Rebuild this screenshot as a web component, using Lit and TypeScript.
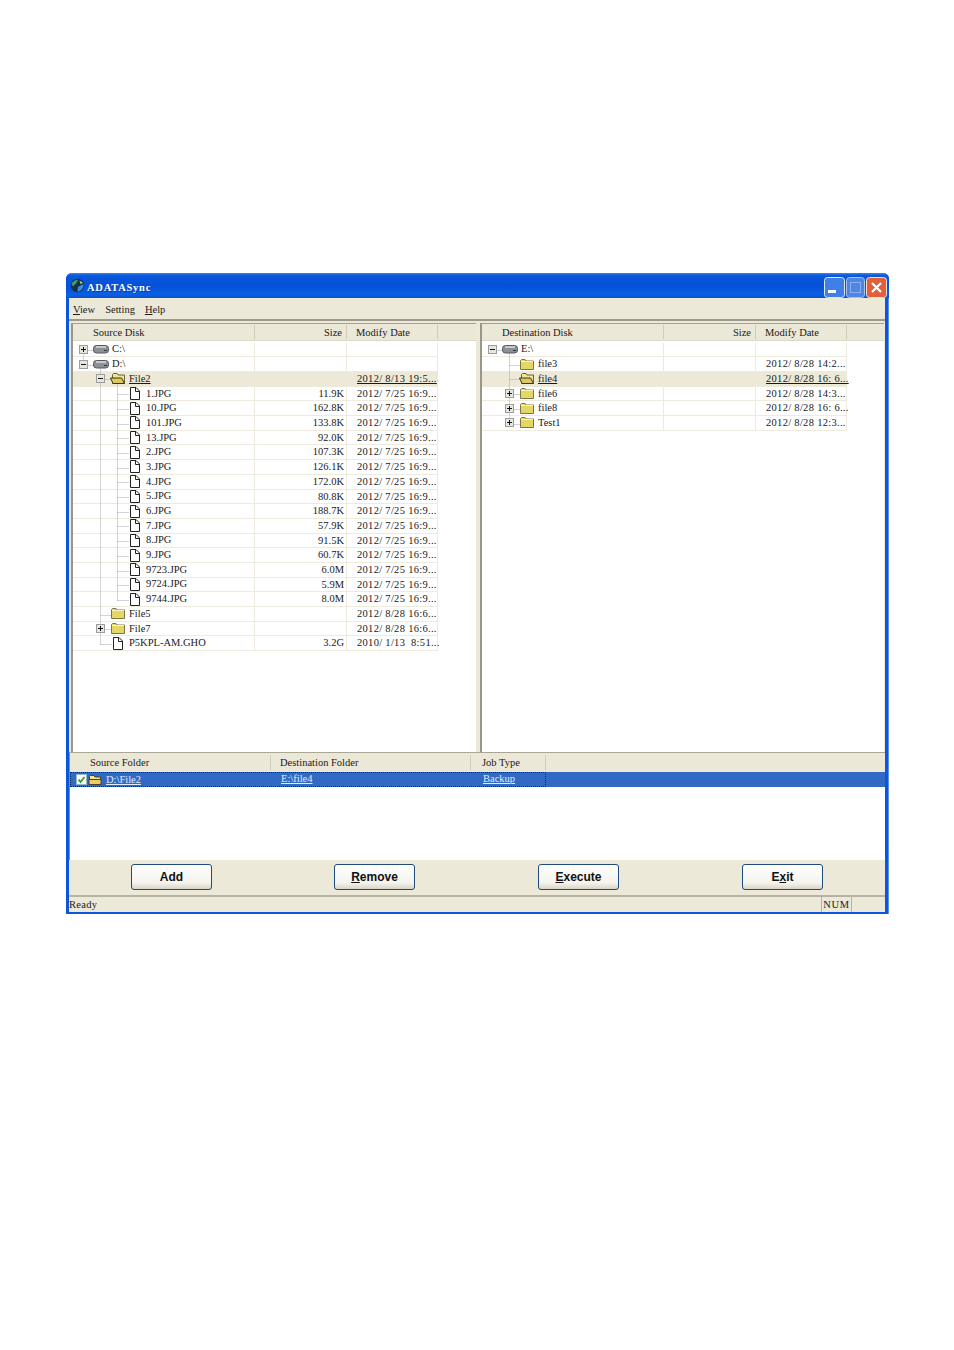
import { LitElement, html, css, svg, nothing } from "lit";
import { customElement } from "lit/decorators.js";

type Row = { n: string; d: number; k: "drive" | "folder" | "open" | "file"; e?: "+" | "-"; s?: string; t?: string; sel?: boolean };

const JPG = (n: string, s: string): Row => ({ n, d: 2, k: "file", s, t: "2012/ 7/25 16:9..." });

const LEFT: Row[] = [
  { n: "C:\\", d: 0, k: "drive", e: "+" },
  { n: "D:\\", d: 0, k: "drive", e: "-" },
  { n: "File2", d: 1, k: "open", e: "-", t: "2012/ 8/13 19:5...", sel: true },
  JPG("1.JPG", "11.9K"), JPG("10.JPG", "162.8K"), JPG("101.JPG", "133.8K"), JPG("13.JPG", "92.0K"),
  JPG("2.JPG", "107.3K"), JPG("3.JPG", "126.1K"), JPG("4.JPG", "172.0K"), JPG("5.JPG", "80.8K"),
  JPG("6.JPG", "188.7K"), JPG("7.JPG", "57.9K"), JPG("8.JPG", "91.5K"), JPG("9.JPG", "60.7K"),
  JPG("9723.JPG", "6.0M"), JPG("9724.JPG", "5.9M"), JPG("9744.JPG", "8.0M"),
  { n: "File5", d: 1, k: "folder", t: "2012/ 8/28 16:6..." },
  { n: "File7", d: 1, k: "folder", e: "+", t: "2012/ 8/28 16:6..." },
  { n: "P5KPL-AM.GHO", d: 1, k: "file", s: "3.2G", t: "2010/ 1/13  8:51..." },
];

const RIGHT: Row[] = [
  { n: "E:\\", d: 0, k: "drive", e: "-" },
  { n: "file3", d: 1, k: "folder", t: "2012/ 8/28 14:2..." },
  { n: "file4", d: 1, k: "open", t: "2012/ 8/28 16: 6...", sel: true },
  { n: "file6", d: 1, k: "folder", e: "+", t: "2012/ 8/28 14:3..." },
  { n: "file8", d: 1, k: "folder", e: "+", t: "2012/ 8/28 16: 6..." },
  { n: "Test1", d: 1, k: "folder", e: "+", t: "2012/ 8/28 12:3..." },
];

const ROW_H = 14.7;
const TREE_TOP = 1.65;

const folderIcon = (open: boolean) => open
  ? html`<svg class="ico" width="16" height="13" viewBox="0 0 16 13">
      <path d="M2.5 11.5V2.5L3.5 1.5H7L8 3H14.5V11.5Z" fill="#f0e39a" stroke="#6b6230"/>
      <path d="M.5 6H11.5L14.5 11.5H3Z" fill="#dccb5c" stroke="#3a3518"/>
    </svg>`
  : html`<svg class="ico" width="16" height="13" viewBox="0 0 16 13">
      <path d="M1.5 11.5V2.5L2.5 1.5H6L7 3H14.5V11.5Z" fill="#e3d766" stroke="#7d7544"/>
      <path d="M2 3.5H14" stroke="#fbf3c0"/>
    </svg>`;

const driveIcon = html`<svg class="ico" width="16" height="10" viewBox="0 0 16 10">
  <rect x=".5" y="1.5" width="15" height="7.5" rx="3" fill="#8d9094" stroke="#55585c"/>
  <path d="M3 3H13" stroke="#dfe2e5" stroke-width="1.4"/>
  <path d="M11 6.5H14" stroke="#35383b"/>
</svg>`;

const fileIcon = html`<svg class="ico" width="10" height="13" viewBox="0 0 10 13">
  <path d="M.5 .5H6L9.5 4V12.5H.5Z" fill="#fff" stroke="#222"/>
  <path d="M5.5 .5V4.5H9.5" fill="none" stroke="#222"/>
</svg>`;

const expander = (e: "+" | "-") => html`<svg class="exp" width="9" height="9" viewBox="0 0 9 9">
  <rect x=".5" y=".5" width="8" height="8" fill="#e6e6dc" stroke="#9a9ea1"/>
  <path d="M2 4.5H7" stroke="#111"/>
  ${e === "+" ? svg`<path d="M4.5 2V7" stroke="#111"/>` : nothing}
</svg>`;

@customElement("tree-pane")
class TreePane extends LitElement {
  static properties = { rows: { attribute: false }, title: {} };
  rows: Row[] = [];
  title = "";

  static styles = css`
    :host { display: flex; flex-direction: column; min-width: 0; background: #fff; border-left: 2px solid #9a978a; border-top: 1px solid #a5a294; position: relative; }
    .head { height: 16px; display: flex; background: #ebe8d8; border-bottom: 1px solid #dcd8c6; box-sizing: content-box; flex: none; }
    .hc { border-right: 1px solid #cfccb9; box-sizing: border-box; height: 14px; margin-top: 1px; line-height: 15px; white-space: pre; }
    .c1 { width: 182px; flex: none; }
    .c2 { width: 92px; flex: none; }
    .c3 { width: 91px; flex: none; }
    .head .c1 { padding-left: 20px; }
    .head .c2 { text-align: right; padding-right: 4px; }
    .head .c3 { padding-left: 9px; }
    .tree { position: relative; flex: 1; padding-top: 1.65px; }
    .lines { position: absolute; inset: 0; width: 100%; height: 100%; z-index: 1; pointer-events: none; }
    .row { display: flex; width: 365px; height: 14.7px; line-height: 14px; box-sizing: border-box; }
    .row.sel { background: #ece9d8; }
    .row > div { border-right: 1px solid #eeebde; border-bottom: 1px solid #eeebde; box-sizing: border-box; white-space: pre; overflow: hidden; }
    .row.sel > div { border-color: #ece9d8; }
    .row.sel .lbl, .row.sel .c3 { text-decoration: underline; }
    .name { display: flex; align-items: center; }
    .slotE { width: 9px; height: 9px; flex: none; margin-right: 5px; position: relative; z-index: 2; display: flex; }
    .exp { display: block; }
    .slotI { width: 16px; flex: none; margin-right: 3px; display: flex; justify-content: center; align-items: center; position: relative; z-index: 2; }
    .ico { display: block; }
    .row .c2 { text-align: right; padding-right: 2px; }
    .row > .c3 { padding-left: 10px; letter-spacing: .3px; overflow: visible; }
  `;

  lines() {
    const out: unknown[] = [];
    const cx = (d: number) => 6 + 17 * d + 4.5;
    const cy = (i: number) => Math.round(TREE_TOP + ROW_H * i + ROW_H / 2) + 0.5;
    this.rows.forEach((r, i) => {
      const x = cx(r.d);
      out.push(svg`<path d="M${x} ${cy(i)}H${x + 11}"/>`);
      let p = i - 1;
      while (p >= 0 && this.rows[p].d > r.d) p--;
      if (p >= 0) out.push(svg`<path d="M${x} ${cy(p)}V${cy(i)}"/>`);
    });
    return out;
  }

  render() {
    return html`
      <div class="head">
        <div class="hc c1">${this.title}</div>
        <div class="hc c2">Size</div>
        <div class="hc c3">Modify Date</div>
      </div>
      <div class="tree">
        <svg class="lines" fill="none" stroke="#a8a8a8" stroke-dasharray="1 1">${this.lines()}</svg>
        ${this.rows.map(r => html`
          <div class="row ${r.sel ? "sel" : ""}">
            <div class="c1 name" style="padding-left:${6 + 17 * r.d}px">
              <span class="slotE">${r.e ? expander(r.e) : nothing}</span>
              <span class="slotI">${r.k === "drive" ? driveIcon : r.k === "file" ? fileIcon : folderIcon(r.k === "open")}</span>
              <span class="lbl">${r.n}</span>
            </div>
            <div class="c2">${r.s ?? ""}</div>
            <div class="c3">${r.t ?? ""}</div>
          </div>`)}
      </div>
    `;
  }
}

@customElement("app-root")
class AppRoot extends LitElement {
  static styles = css`
    :host { display: block; font-family: "Liberation Serif", serif; font-size: 10.5px; color: #1a1a1a; padding: 273px 0 436px 66px; background: #fff; }
    .win { width: 823px; height: 641px; box-sizing: border-box; display: flex; flex-direction: column; background: #0a57dc; border-radius: 6px 6px 0 0; padding: 0 4px 2px 3px; box-shadow: inset -1px 0 #5b8fe8; }
    .title { height: 25px; flex: none; margin: 0 -4px 0 -3px; padding: 0 2px 0 4px; display: flex; align-items: center; border-radius: 6px 6px 0 0; background: linear-gradient(#3a86ee 0, #0a58dc 10%, #0550d8 50%, #0b5fe4 85%, #0a52cc 100%); color: #fff; font-weight: bold; font-size: 10.5px; letter-spacing: .75px; text-shadow: 1px 1px #0a3a9c; }
    .logo { margin-right: 2px; display: block; flex: none; }
    .title .t { flex: 1; padding-top: 3px; }
    .tb { display: flex; gap: 1px; margin-top: 3px; }
    .tb svg { display: block; }
    .body { flex: 1; min-height: 0; display: flex; flex-direction: column; background: #ece9d8; }
    .menu { flex: none; display: flex; align-items: center; padding: 1px 0 0 4px; gap: 10px; border-bottom: 2px solid #9d9a8c; box-sizing: border-box; height: 23px; }
    .panes { flex: 1; min-height: 0; display: grid; grid-template-columns: 405px 404px; gap: 4px; padding: 2px 0 0 2px; justify-content: start; border-bottom: 1px solid #a9a694; }
    .list { flex: none; height: 107px; display: flex; flex-direction: column; background: #fff; border-left: 1px solid #8f8d82; }
    .lhead { height: 19px; display: flex; background: #ebe8d8; flex: none; }
    .lhead div { height: 15px; margin-top: 2px; line-height: 15px; box-sizing: border-box; border-right: 1px solid #cfccb9; }
    .l1 { width: 201px; flex: none; }
    .l2 { width: 200px; flex: none; }
    .l3 { width: 75px; flex: none; }
    .lhead .l1 { padding-left: 20px; }
    .lhead .l2 { padding-left: 9px; }
    .lhead .l3 { padding-left: 11px; }
    .lrow { height: 15px; background: #316ac5; display: flex; color: #e3ebfa; line-height: 14px; flex: none; }
    .lrow .l1 { display: flex; align-items: center; padding-left: 6px; gap: 1px; box-sizing: border-box; }
    .lrow .l2 { padding-left: 10px; box-sizing: border-box; }
    .lrow .l3 { padding-left: 12px; box-sizing: border-box; }
    .lrow .f { display: flex; width: 476px; outline: 1px dotted #0d2a55; outline-offset: -1px; }
    .lrow .lnk { text-decoration: underline; margin-left: 3px; }
    .lrow .l2, .lrow .l3 { text-decoration: underline; }
    .btns { height: 35px; flex: none; display: grid; grid-template-columns: 203px 204px 204px 81px; align-items: start; padding: 4px 0 0 62px; box-sizing: border-box; }
    button { all: unset; box-sizing: border-box; width: 81px; height: 26px; text-align: center; line-height: 25px; font-family: "Liberation Sans", sans-serif; font-size: 12px; font-weight: bold; color: #111; border: 1px solid #1f4a7e; border-radius: 3px; background: linear-gradient(#fefefe, #f4f3ed 75%, #d8d4c6); }
    .status { flex: none; display: flex; align-items: center; border-top: 2px solid #b6b3a4; line-height: 15px; box-sizing: border-box; height: 17px; letter-spacing: .3px; }
    .status .r { flex: 1; }
    .status .num { width: 31px; text-align: center; border-left: 1px solid #b5b2a2; border-right: 1px solid #b5b2a2; margin-right: 33px; box-sizing: border-box; letter-spacing: .6px; }
  `;

  render() {
    return html`
      <div class="win">
        <div class="title">
          <svg class="logo" width="15" height="15" viewBox="0 0 15 15">
            <circle cx="7.5" cy="7.5" r="6.8" fill="#15324a"/>
            <path d="M1.5 6C3 2.5 6 1.5 8 2L6.5 5 3 8.5Z" fill="#3f9e5a"/>
            <path d="M8 9C10 8 12 6 13.6 6.5 13.8 10 11 13.5 7.5 13.6Z" fill="#3a8fd0"/>
            <path d="M9.5 2.5 13 5 10.5 6Z" fill="#a6d8a0"/>
          </svg>
          <span class="t">ADATASync</span>
          <div class="tb">
            <svg width="21" height="21" viewBox="0 0 21 21">
              <rect x=".5" y=".5" width="20" height="20" rx="3" fill="#3f7fe8" stroke="#dfe8fb"/>
              <rect x="4" y="13" width="8" height="3" fill="#fff"/>
            </svg>
            <svg width="19" height="21" viewBox="0 0 19 21">
              <rect x=".5" y=".5" width="18" height="20" rx="3" fill="#4d86e6" stroke="#a9c3f0"/>
              <rect x="4.5" y="5.5" width="10" height="10" fill="none" stroke="#8fb0ea"/>
            </svg>
            <svg width="21" height="21" viewBox="0 0 21 21">
              <rect x=".5" y=".5" width="20" height="20" rx="3" fill="#e0603a" stroke="#f3e0d8"/>
              <path d="M6 6 15 15M15 6 6 15" stroke="#fff" stroke-width="2.2"/>
            </svg>
          </div>
        </div>
        <div class="body">
          <div class="menu">
            <span><u>V</u>iew</span><span>Setting</span><span><u>H</u>elp</span>
          </div>
          <div class="panes">
            <tree-pane title="Source Disk" .rows=${LEFT}></tree-pane>
            <tree-pane title="Destination Disk" .rows=${RIGHT}></tree-pane>
          </div>
          <div class="list">
            <div class="lhead">
              <div class="l1">Source Folder</div>
              <div class="l2">Destination Folder</div>
              <div class="l3">Job Type</div>
            </div>
            <div class="lrow">
              <div class="f">
                <div class="l1">
                  <svg width="11" height="11" viewBox="0 0 11 11">
                    <rect x=".5" y=".5" width="10" height="10" fill="#fff" stroke="#9db4c8"/>
                    <path d="M2.5 5.5 4.5 8 8.5 3" fill="none" stroke="#2f9e3a" stroke-width="1.8"/>
                  </svg>
                  <svg width="14" height="12" viewBox="0 0 14 12">
                    <path d="M1.5 10.5V2.5L2.5 1.5H6L7 3H12.5V10.5Z" fill="#f5e28a" stroke="#4a4420"/>
                    <path d="M1 5.5H13V10.5H1Z" fill="#e9cf62" stroke="#4a4420"/>
                  </svg>
                  <span class="lnk">D:\\File2</span>
                </div>
                <div class="l2">E:\\file4</div>
                <div class="l3">Backup</div>
              </div>
            </div>
          </div>
          <div class="btns">
            <button>Add</button>
            <button><u>R</u>emove</button>
            <button><u>E</u>xecute</button>
            <button>E<u>x</u>it</button>
          </div>
          <div class="status">
            <span class="r">Ready</span>
            <span class="num">NUM</span>
          </div>
        </div>
      </div>
    `;
  }
}
